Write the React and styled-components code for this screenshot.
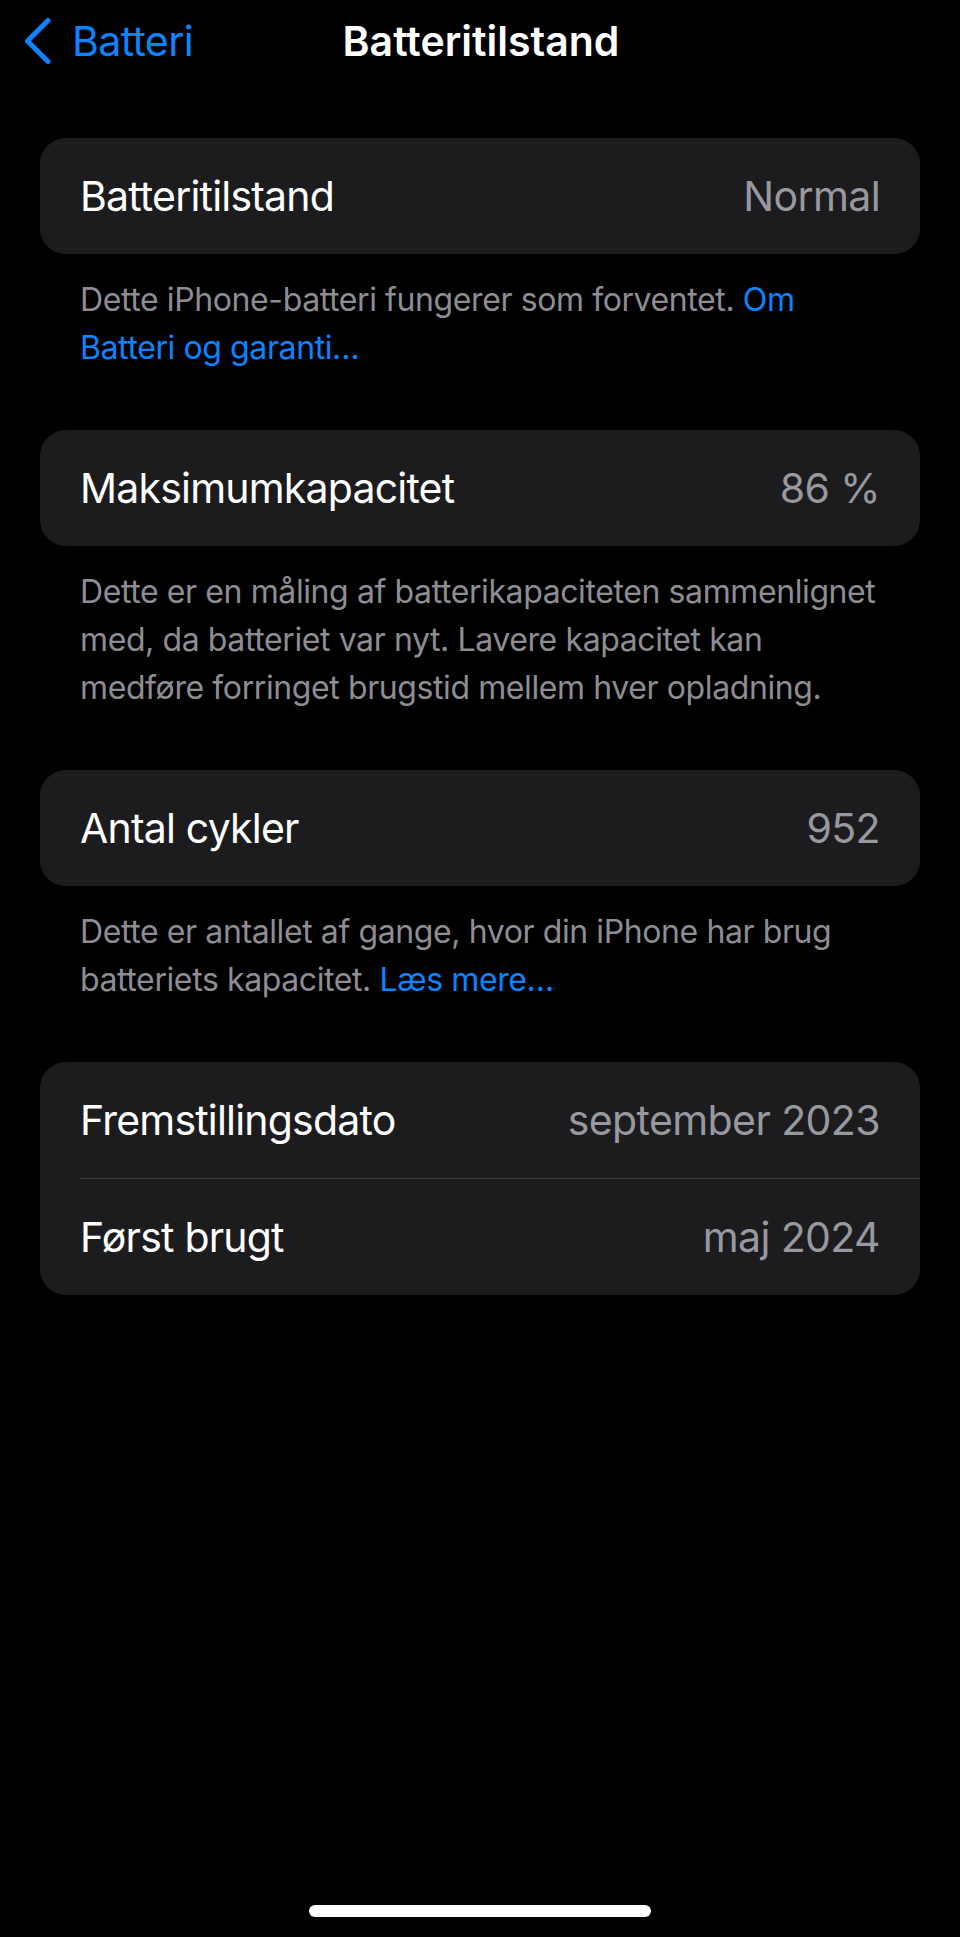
import React from "react";
import styled, { createGlobalStyle } from "styled-components";

const GlobalStyle = createGlobalStyle`
  html, body {
    margin: 0;
    padding: 0;
    background: #000;
  }
  body {
    font-family: Inter, "Noto Sans", "Liberation Sans", sans-serif;
    -webkit-font-smoothing: antialiased;
  }
`;

const Page = styled.div`
  min-height: 1937px;
  display: flex;
  flex-direction: column;
  background: #000;
  color: #fff;
`;

const NavBar = styled.header`
  height: 82px;
  display: grid;
  grid-template-columns: 1fr auto 1fr;
  align-items: center;
  padding: 0 20px 0 22px;
`;

const BackButton = styled.button`
  justify-self: start;
  display: flex;
  align-items: center;
  gap: 20px;
  padding: 0;
  border: 0;
  background: none;
  color: #0a84ff;
  font-family: inherit;
  font-size: 41px;
  letter-spacing: -0.6px;
  cursor: pointer;
`;

const Title = styled.h1`
  margin: 0;
  font-size: 41px;
  font-weight: 600;
  letter-spacing: 0;
  color: #fff;
`;

const Content = styled.main`
  display: flex;
  flex-direction: column;
  gap: 58px;
  padding: 56px 40px 0;
`;

const Section = styled.section`
  display: flex;
  flex-direction: column;
`;

const Card = styled.div`
  background: #1c1c1e;
  border-radius: 26px;
  overflow: hidden;
`;

const Row = styled.div`
  height: 116px;
  display: flex;
  align-items: center;
  justify-content: space-between;
  padding: 0 40px;
  font-size: 41px;
  letter-spacing: -0.8px;
`;

const Separator = styled.div`
  height: 1px;
  margin-left: 40px;
  background: #3a3a3c;
`;

const Label = styled.span`
  color: #fff;
`;

const Value = styled.span`
  color: #98989f;
  letter-spacing: -0.6px;
`;

const Footnote = styled.p`
  margin: 0;
  padding: 22px 40px 0;
  font-size: 32px;
  line-height: 48px;
  letter-spacing: -0.4px;
  white-space: nowrap;
  color: #8d8d93;
`;

const Link = styled.a`
  color: #0a84ff;
  text-decoration: none;
`;

const Spacer = styled.div`
  flex: 1;
`;

const HomeIndicator = styled.div`
  align-self: center;
  width: 342px;
  height: 12px;
  margin-bottom: 20px;
  border-radius: 6px;
  background: #fff;
`;

const Chevron = () => (
  <svg width="30" height="48" viewBox="0 0 30 48" fill="none" aria-hidden="true">
    <path
      d="M26 3.5 L5.5 24 L26 44.5"
      stroke="#0a84ff"
      strokeWidth="5"
      strokeLinecap="round"
      strokeLinejoin="round"
    />
  </svg>
);

export default function App() {
  return (
    <>
      <GlobalStyle />
      <Page>
        <NavBar>
          <BackButton>
            <Chevron />
            Batteri
          </BackButton>
          <Title>Batteritilstand</Title>
          <span />
        </NavBar>
        <Content>
          <Section>
            <Card>
              <Row>
                <Label>Batteritilstand</Label>
                <Value>Normal</Value>
              </Row>
            </Card>
            <Footnote>
              Dette iPhone-batteri fungerer som forventet. <Link>Om<br />Batteri og garanti…</Link>
            </Footnote>
          </Section>
          <Section>
            <Card>
              <Row>
                <Label>Maksimumkapacitet</Label>
                <Value>86 %</Value>
              </Row>
            </Card>
            <Footnote>
              Dette er en måling af batterikapaciteten sammenlignet<br />
              med, da batteriet var nyt. Lavere kapacitet kan<br />
              medføre forringet brugstid mellem hver opladning.
            </Footnote>
          </Section>
          <Section>
            <Card>
              <Row>
                <Label>Antal cykler</Label>
                <Value>952</Value>
              </Row>
            </Card>
            <Footnote>
              Dette er antallet af gange, hvor din iPhone har brug<br />
              batteriets kapacitet. <Link>Læs mere…</Link>
            </Footnote>
          </Section>
          <Section>
            <Card>
              <Row>
                <Label>Fremstillingsdato</Label>
                <Value>september 2023</Value>
              </Row>
              <Separator />
              <Row>
                <Label>Først brugt</Label>
                <Value>maj 2024</Value>
              </Row>
            </Card>
          </Section>
        </Content>
        <Spacer />
        <HomeIndicator />
      </Page>
    </>
  );
}
